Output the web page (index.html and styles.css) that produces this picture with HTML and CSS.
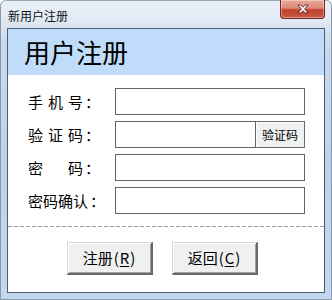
FILE: index.html
```html
<!DOCTYPE html>
<html lang="zh-CN">
<head>
<meta charset="utf-8">
<title>新用户注册</title>
<link rel="stylesheet" href="styles.css">
</head>
<body>
<div class="window">
  <div class="titlebar">
    <span class="title">新用户注册</span>
    <div class="close">
      <svg width="14" height="10" viewBox="0 0 14 10">
        <path d="M2 1 L5 1 L7 3.2 L9 1 L12 1 L8.6 5 L12 9 L9 9 L7 6.8 L5 9 L2 9 L5.4 5 Z" fill="#fff" stroke="#5a2a24" stroke-width="0.9" stroke-linejoin="round"/>
      </svg>
    </div>
  </div>
  <div class="client">
    <div class="header">用户注册</div>
    <div class="form">
      <div class="row">
        <div class="label"><span class="ch sp">手</span><span class="ch sp">机</span><span class="ch">号</span><span class="ch colon">：</span></div>
        <div class="input"></div>
      </div>
      <div class="row">
        <div class="label"><span class="ch sp">验</span><span class="ch sp">证</span><span class="ch">码</span><span class="ch colon">：</span></div>
        <div class="field">
          <div class="input short"></div>
          <div class="codebtn">验证码</div>
        </div>
      </div>
      <div class="row">
        <div class="label"><span class="ch wide">密</span><span class="ch">码</span><span class="ch colon">：</span></div>
        <div class="input"></div>
      </div>
      <div class="row">
        <div class="label"><span class="ch">密</span><span class="ch">码</span><span class="ch">确</span><span class="ch">认</span><span class="ch colon">：</span></div>
        <div class="input"></div>
      </div>
    </div>
    <div class="divider"></div>
    <div class="actions">
      <div class="btn">注册<span class="paren">(</span><u>R</u><span class="paren">)</span></div>
      <div class="btn">返回<span class="paren">(</span><u>C</u><span class="paren">)</span></div>
    </div>
  </div>
</div>
</body>
</html>
```

FILE: styles.css
```css
html, body {
  margin: 0;
  padding: 0;
  background: #ffffff;
}
body {
  font-family: "Noto Sans CJK SC", "Noto Sans", sans-serif;
  color: #000;
}
.window {
  width: 332px;
  height: 300px;
  box-sizing: border-box;
  padding: 0 6px 6px 6px;
  display: flex;
  flex-direction: column;
  background: linear-gradient(180deg, #eaf0f7 0px, #e0e9f4 20px, #c9daee 40px, #bcd2ec 160px, #c3d7ee 300px);
  border: 1px solid #8a98a8;
  border-top-color: #9aa6b4;
  border-radius: 6px 6px 0 0;
}
.titlebar {
  height: 27px;
  display: flex;
  align-items: flex-start;
  justify-content: space-between;
}
.title {
  font-size: 12px;
  line-height: 12px;
  margin-top: 9px;
  padding-left: 1px;
  color: #111;
}
.close {
  width: 45px;
  height: 19px;
  margin-top: -1px;
  box-sizing: border-box;
  border: 1px solid #6b2a22;
  border-top: none;
  border-radius: 0 0 4px 4px;
  background: linear-gradient(180deg, #e9a99a 0%, #db8a78 45%, #c4402d 55%, #c95a44 100%);
  display: flex;
  align-items: center;
  justify-content: center;
  box-shadow: inset 0 0 0 1px rgba(255,255,255,0.35);
}
.client {
  flex: 1;
  background: #fff;
  border: 1px solid #4f5d70;
  display: flex;
  flex-direction: column;
}
.header {
  height: 46px;
  background: #bfdcfb;
  font-size: 26px;
  line-height: 46px;
  padding-left: 16px;
  color: #000;
}
.form {
  padding: 13px 0 0 20px;
  display: flex;
  flex-direction: column;
  gap: 6px;
}
.row {
  display: flex;
  align-items: center;
  height: 27px;
}
.label {
  width: 87px;
  display: flex;
  font-size: 15px;
  line-height: 27px;
  color: #000;
}
.ch {
  width: 15px;
  text-align: center;
}
.ch.sp {
  margin-right: 5px;
}
.ch.wide {
  margin-right: 25px;
}
.ch.colon {
  padding-left: 2px;
}
.input {
  width: 190px;
  height: 27px;
  box-sizing: border-box;
  border: 1px solid #646464;
  background: #fff;
}
.field {
  display: flex;
  width: 190px;
  height: 27px;
}
.input.short {
  width: 141px;
  height: 27px;
}
.codebtn {
  width: 49px;
  height: 27px;
  box-sizing: border-box;
  border: 1px solid #6c6c6c;
  border-left: none;
  background: #f0f0f0;
  font-size: 12px;
  line-height: 25px;
  text-align: center;
  box-shadow: inset 1px 1px 0 #ffffff;
}
.divider {
  margin-top: 12px;
  height: 1px;
  background: repeating-linear-gradient(90deg, #a0a0a0 0px, #a0a0a0 4px, transparent 4px, transparent 6px);
}
.actions {
  display: flex;
  gap: 19px;
  padding: 15px 0 0 59px;
}
.btn {
  width: 86px;
  height: 33px;
  box-sizing: border-box;
  background: #f0f0f0;
  border-top: 1px solid #d8d8d8;
  border-left: 1px solid #d8d8d8;
  border-right: 2px solid #6a6a6a;
  border-bottom: 2px solid #6a6a6a;
  box-shadow: inset 1px 1px 0 #ffffff, inset -1px -1px 0 #a0a0a0;
  font-size: 15px;
  line-height: 30px;
  text-align: center;
  color: #000;
}
.paren {
  padding: 0 1px;
}
.btn u {
  text-underline-offset: 2px;
}
```
